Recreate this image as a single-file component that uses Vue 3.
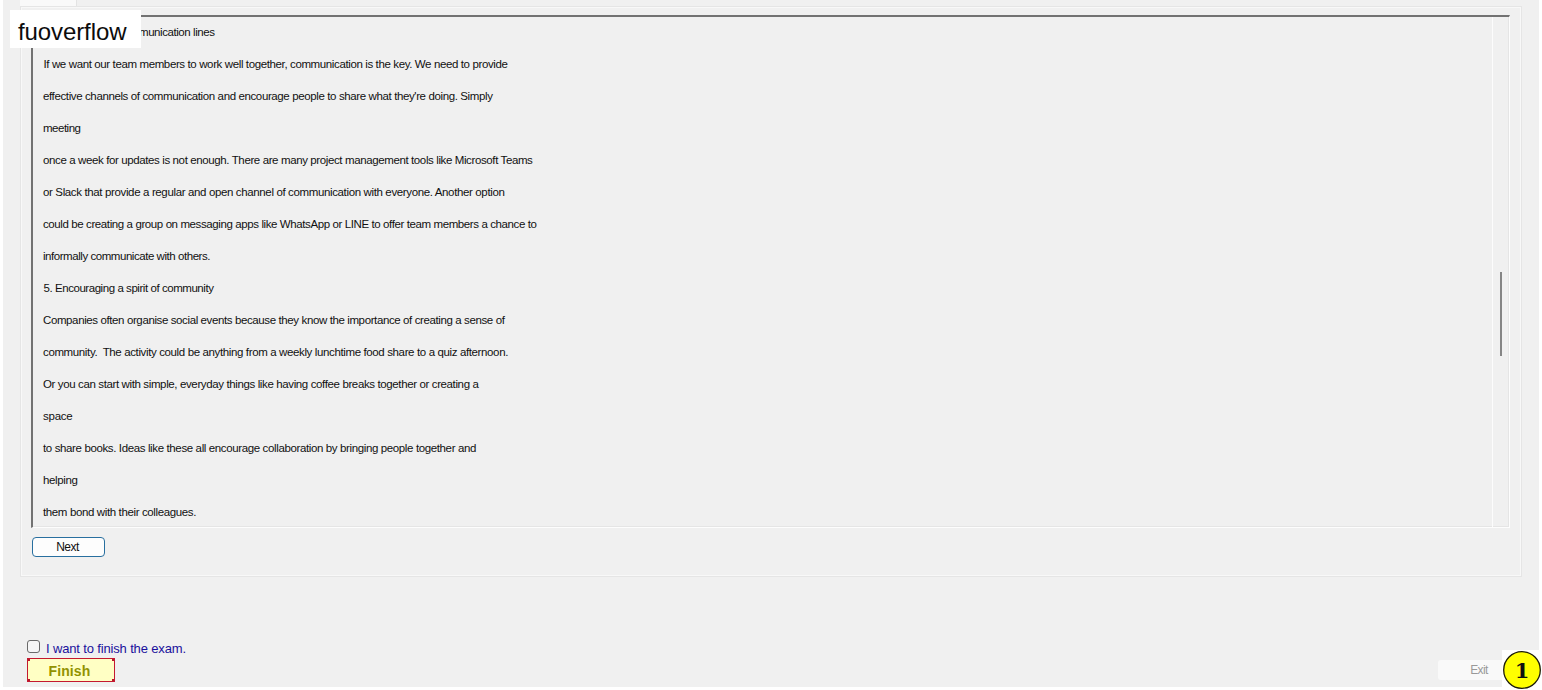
<script setup>
import { ref, onMounted } from 'vue'

// Each line carries its left offset and its rendered width in pixels.
const lines = ref([
  { text: 'munication lines', x: 139, w: 75.5 },
  { text: 'If we want our team members to work well together, communication is the key. We need to provide', x: 43.5, w: 464 },
  { text: "effective channels of communication and encourage people to share what they're doing. Simply", x: 43, w: 449.5 },
  { text: 'meeting', x: 43, w: 37.5 },
  { text: 'once a week for updates is not enough. There are many project management tools like Microsoft Teams', x: 43, w: 489.5 },
  { text: 'or Slack that provide a regular and open channel of communication with everyone. Another option', x: 43, w: 461.5 },
  { text: 'could be creating a group on messaging apps like WhatsApp or LINE to offer team members a chance to', x: 43, w: 493.5 },
  { text: 'informally communicate with others.', x: 43, w: 167 },
  { text: '5. Encouraging a spirit of community', x: 43.5, w: 170 },
  { text: 'Companies often organise social events because they know the importance of creating a sense of', x: 43, w: 461.5 },
  { text: 'community.  The activity could be anything from a weekly lunchtime food share to a quiz afternoon.', x: 43, w: 465 },
  { text: 'Or you can start with simple, everyday things like having coffee breaks together or creating a', x: 43, w: 435.5 },
  { text: 'space', x: 43, w: 29.5 },
  { text: 'to share books. Ideas like these all encourage collaboration by bringing people together and', x: 43, w: 433 },
  { text: 'helping', x: 43, w: 34.5 },
  { text: 'them bond with their colleagues.', x: 43, w: 153 },
])

const rows = ref([])
const spacing = ref([])

onMounted(() => {
  spacing.value = lines.value.map((line, i) => {
    const natural = rows.value[i].getBoundingClientRect().width
    return (line.w - natural) / line.text.length
  })
})
</script>

<template>
  <div class="page">
    <main class="window">
      <div class="tab"></div>
      <section class="group">
        <div class="textbox">
          <div class="content">
            <p v-for="(line, i) in lines" :key="i" class="line" :style="{ paddingLeft: line.x - 33 + 'px' }">
              <span ref="rows" :style="{ letterSpacing: (spacing[i] || 0) + 'px' }">{{ line.text }}</span>
            </p>
          </div>
          <div class="scrollbar"><div class="thumb"></div></div>
        </div>
        <button class="next">Next</button>
      </section>
      <footer class="footer">
        <div class="finish-area">
          <label class="confirm"><span class="box"></span><span>I want to finish the exam.</span></label>
          <button class="finish"><span>Finish</span><i class="dot tl"></i><i class="dot tr"></i><i class="dot bl"></i><i class="dot br"></i></button>
        </div>
        <button class="exit">Exit</button>
      </footer>
    </main>
    <div class="watermark">fuoverflow</div>
    <div class="badge">
      <svg width="40" height="40" viewBox="0 0 40 40">
        <circle cx="20" cy="20" r="18.3" fill="#ffff00" stroke="#1c1c08" stroke-width="1.3" />
      </svg>
      <span class="num">1</span>
    </div>
  </div>
</template>

<style>
body { background: #fff; overflow: hidden; }
</style>

<style scoped>
.page {
  position: relative;
  width: 1542px;
  height: 690px;
  overflow: hidden;
  background: #fff;
  font-family: "Liberation Sans", Arial, sans-serif;
  color: #101010;
}
.page * { box-sizing: border-box; }
.window {
  display: flex;
  flex-direction: column;
  width: 1536px;
  height: 687px;
  margin-left: 3px;
  background: #f0f0f0;
}
.tab {
  width: 57px;
  height: 6px;
  flex: none;
  margin-left: 17px;
  background: #f9f9f9;
  border-right: 1px solid #e3e3e3;
}
.group {
  width: 1502px;
  height: 571px;
  flex: none;
  margin-left: 17px;
  padding: 8px 0 0 10px;
  border: 1px solid #e5e5e5;
  box-shadow: inset 0 0 0 1px #f8f8f8;
}
.textbox {
  display: flex;
  width: 1479px;
  height: 513px;
  border-style: solid;
  border-width: 2px 1px 1px 2px;
  border-color: #727272 #fdfdfd #fdfdfd #727272;
  box-shadow: inset -1px -1px 0 #e5e5e5;
}
.content { flex: 1; height: 510px; overflow: hidden; }
.line {
  height: 32px;
  margin: 0;
  font-size: 11.5px;
  line-height: 31px;
  white-space: pre;
}
.scrollbar {
  width: 17px;
  padding: 255px 0 0 7px;
  border-left: 1px solid #fcfcfc;
}
.thumb { width: 2px; height: 84px; background: #858585; }
button { font-family: inherit; padding: 0; margin: 0; }
.next {
  display: block;
  width: 73px;
  height: 20px;
  margin: 9px 0 0 1px;
  border: 1px solid #286f9f;
  border-radius: 4px;
  background: #fdfdfd;
  color: #101010;
  font-size: 12px;
  line-height: 18px;
  letter-spacing: -0.5px;
  padding-right: 2px;
}
.footer {
  display: flex;
  justify-content: space-between;
  align-items: flex-end;
  margin-top: 62px;
  padding-left: 24px;
  height: 43px;
}
.confirm {
  display: flex;
  align-items: center;
  height: 19px;
  gap: 6px;
  font-size: 13px;
  color: #1a109c;
}
.confirm span:last-child { margin-top: -1px; letter-spacing: -0.15px; }
.box {
  width: 13px;
  height: 13px;
  margin-top: -5px;
  border: 1px solid #6a6a6a;
  border-radius: 3px;
  background: #f6f6f6;
}
.finish {
  position: relative;
  display: block;
  width: 88px;
  height: 24px;
  border: 1px solid #c4182f;
  border-radius: 0;
  background: #ffffc4;
  color: #929200;
  font-size: 14px;
  font-weight: bold;
  line-height: 24px;
  padding-right: 3px;
  letter-spacing: 0.1px;
}
.dot { position: absolute; width: 2px; height: 2px; background: #b8182c; }
.tl { top: 0; left: 0; }
.tr { top: 0; right: 0; }
.bl { bottom: 0; left: 0; }
.br { bottom: 0; right: 0; }
.exit {
  width: 82px;
  height: 20px;
  margin: 0 19px 2px 0;
  border: 0;
  border-radius: 3px;
  background: #f9f9f9;
  color: #999;
  font-size: 12px;
  line-height: 20px;
  letter-spacing: -0.6px;
}
.watermark {
  position: absolute;
  left: 10px;
  top: 10px;
  width: 131px;
  height: 38px;
  padding-left: 8px;
  background: #fff;
  color: #0c0c0c;
  font-size: 24px;
  line-height: 43px;
  letter-spacing: -0.1px;
}
.badge {
  position: absolute;
  left: 1502px;
  top: 650px;
  width: 40px;
  height: 40px;
  background: #fff;
}
.badge svg { display: block; }
.num {
  position: absolute;
  inset: 0;
  text-align: center;
  font: bold 21px/42px "DejaVu Serif", serif;
}
</style>
